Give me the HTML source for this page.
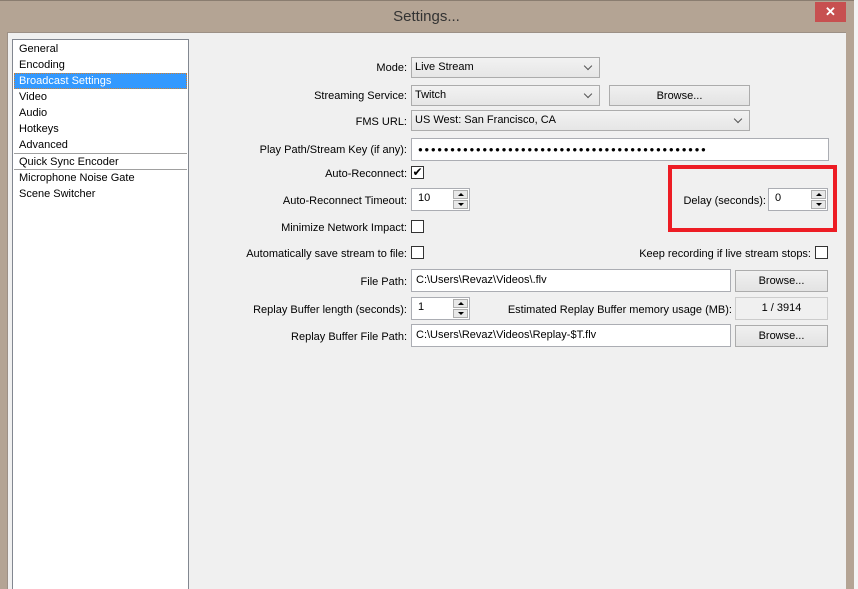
<!DOCTYPE html>
<html><head><style>
*{margin:0;padding:0;box-sizing:border-box}
html,body{width:858px;height:589px;overflow:hidden}
body{background:#fff;position:relative;font-family:"Liberation Sans",sans-serif;font-size:11px;color:#000}
.a{position:absolute}
.lbl{position:absolute;text-align:right;white-space:nowrap;line-height:14px}
.combo{position:absolute;background:linear-gradient(#f2f2f2,#e6e6e6);border:1px solid #acacac;padding-left:3px;line-height:19px;white-space:nowrap}
.combo:after{content:"";position:absolute;right:8px;top:5px;width:5px;height:5px;border-right:1.5px solid #555;border-bottom:1.5px solid #555;transform:rotate(45deg)}
.btn{position:absolute;background:linear-gradient(#f0f0f0,#e3e3e3);border:1px solid #acacac;text-align:center;line-height:20px}
.inp{position:absolute;background:#fff;border:1px solid #abadb3;padding-left:4px;line-height:21px;white-space:nowrap}
.cb{position:absolute;width:13px;height:13px;background:#fff;border:1px solid #333}
.spin{position:absolute;background:#fff;border:1px solid #abadb3;padding-left:6px;line-height:19px}
.spin .u,.spin .d{position:absolute;right:1px;width:15px;height:9px;background:#e8e8e8;border:1px solid #adadad}
.spin .u{top:1px}.spin .d{bottom:1px}
.spin .u:after{content:"";position:absolute;left:4px;top:2px;border:3px solid transparent;border-bottom:3px solid #000;border-top:0}
.spin .d:after{content:"";position:absolute;left:4px;top:2px;border:3px solid transparent;border-top:3px solid #000;border-bottom:0}
.li{position:absolute;left:19px;line-height:16px}
</style></head><body>
<div class="a" style="left:0;top:0;width:854px;height:589px;background:#b4a494;border-top:1px solid #8a7d70"></div>
<div class="a" style="left:854px;top:0;width:4px;height:589px;background:#f4f4f4"></div>
<div class="a" style="left:0;top:8px;width:853px;text-align:center;font-size:15px;color:#333;">Settings...</div>
<div class="a" style="left:815px;top:2px;width:31px;height:20px;background:#c75050;color:#fff;text-align:center;font-size:13px;line-height:20px;font-weight:bold">✕</div>
<div class="a" style="left:7px;top:32px;width:839px;height:557px;background:#f0f0f0;border-left:1px solid #9c9086;border-top:1px solid #9c9086"></div>
<!-- list -->
<div class="a" style="left:12px;top:39px;width:177px;height:560px;background:#fff;border:1px solid #828790"></div>
<div class="li" style="top:41px">General</div>
<div class="li" style="top:57px">Encoding</div>
<div class="a" style="left:14px;top:73px;width:173px;height:16px;background:#3399ff;border:1px dotted #d08030"></div>
<div class="li" style="top:73px;color:#fff">Broadcast Settings</div>
<div class="li" style="top:89px">Video</div>
<div class="li" style="top:105px">Audio</div>
<div class="li" style="top:121px">Hotkeys</div>
<div class="li" style="top:137px">Advanced</div>
<div class="a" style="left:14px;top:153px;width:173px;height:1px;background:#a0a0a0"></div>
<div class="li" style="top:154px">Quick Sync Encoder</div>
<div class="a" style="left:14px;top:169px;width:173px;height:1px;background:#a0a0a0"></div>
<div class="li" style="top:170px">Microphone Noise Gate</div>
<div class="li" style="top:186px">Scene Switcher</div>
<!-- form -->
<div class="lbl" style="right:451px;top:61px">Mode:</div>
<div class="combo" style="left:411px;top:57px;width:189px;height:21px">Live Stream</div>
<div class="lbl" style="right:451px;top:89px">Streaming Service:</div>
<div class="combo" style="left:411px;top:85px;width:189px;height:21px">Twitch</div>
<div class="btn" style="left:609px;top:85px;width:141px;height:21px">Browse...</div>
<div class="lbl" style="right:451px;top:115px">FMS URL:</div>
<div class="combo" style="left:411px;top:110px;width:339px;height:21px">US West: San Francisco, CA</div>
<div class="lbl" style="right:451px;top:143px">Play Path/Stream Key (if any):</div>
<div class="inp" style="left:411px;top:138px;width:418px;height:23px;font-size:8px;letter-spacing:1.6px;line-height:21px;padding-left:6px">●●●●●●●●●●●●●●●●●●●●●●●●●●●●●●●●●●●●●●●●●●●●●</div>
<div class="lbl" style="right:451px;top:167px">Auto-Reconnect:</div>
<div class="cb" style="left:411px;top:166px;font-size:12px;line-height:11px;text-align:center">✔</div>
<div class="lbl" style="right:451px;top:194px">Auto-Reconnect Timeout:</div>
<div class="spin" style="left:411px;top:188px;width:59px;height:23px">10<div class="u"></div><div class="d"></div></div>
<div class="lbl" style="right:451px;top:221px">Minimize Network Impact:</div>
<div class="cb" style="left:411px;top:220px"></div>
<div class="lbl" style="right:451px;top:247px">Automatically save stream to file:</div>
<div class="cb" style="left:411px;top:246px"></div>
<div class="lbl" style="right:47px;top:247px">Keep recording if live stream stops:</div>
<div class="cb" style="left:815px;top:246px"></div>
<div class="lbl" style="right:451px;top:275px">File Path:</div>
<div class="inp" style="left:411px;top:269px;width:320px;height:23px">C:\Users\Revaz\Videos\.flv</div>
<div class="btn" style="left:735px;top:270px;width:93px;height:22px">Browse...</div>
<div class="lbl" style="right:451px;top:303px">Replay Buffer length (seconds):</div>
<div class="spin" style="left:411px;top:297px;width:59px;height:23px">1<div class="u"></div><div class="d"></div></div>
<div class="lbl" style="right:126px;top:303px">Estimated Replay Buffer memory usage (MB):</div>
<div class="a" style="left:735px;top:297px;width:93px;height:23px;border:1px solid #ccc;background:#f0f0f0;text-align:center;line-height:20px">1 / 3914</div>
<div class="lbl" style="right:451px;top:330px">Replay Buffer File Path:</div>
<div class="inp" style="left:411px;top:324px;width:320px;height:23px">C:\Users\Revaz\Videos\Replay-$T.flv</div>
<div class="btn" style="left:735px;top:325px;width:93px;height:22px">Browse...</div>
<!-- red box -->
<div class="a" style="left:668px;top:165px;width:169px;height:67px;border:4px solid #ed1c24"></div>
<div class="lbl" style="right:92px;top:194px">Delay (seconds):</div>
<div class="spin" style="left:768px;top:188px;width:60px;height:23px">0<div class="u"></div><div class="d"></div></div>
</body></html>
